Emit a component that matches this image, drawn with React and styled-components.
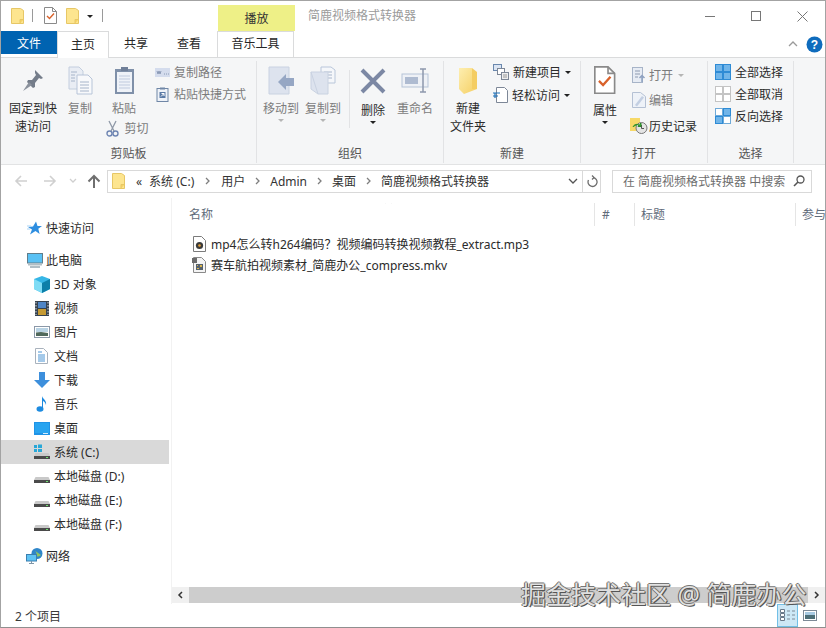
import React from "react";
import styled, { createGlobalStyle } from "styled-components";

const GlobalStyle = createGlobalStyle`
  html, body { margin: 0; padding: 0; background: #fff; }
  body { font-family: "Noto Sans", "Noto Sans CJK SC", sans-serif; font-size: 12px; color: #262626; }
  * { box-sizing: border-box; }
  svg { display: block; flex: none; }
`;

const Window = styled.div`
  position: relative;
  width: 826px;
  height: 628px;
  display: flex;
  flex-direction: column;
  overflow: hidden;
  background: #fff;
  border: 1px solid #a3a3a3;
  border-bottom-color: #8f8f8f;
`;

/* title bar */
const TitleRow = styled.div`
  height: 30px;
  display: flex;
  align-items: flex-end;
`;
const Qat = styled.div`
  width: 217px;
  height: 30px;
  display: flex;
  align-items: center;
  gap: ${(p) => p.$gap || 0}px;
  padding: 0 0 1px 10px;
`;
const QatSep = styled.div`
  width: 1px;
  height: 13px;
  background: #9a9a9a;
  margin: ${(p) => p.$m || "0 11px 0 8px"};
`;
const QatGap = styled.div`
  width: 9px;
  flex: none;
`;
const ContextTab = styled.div`
  width: 77px;
  height: 26px;
  background: #eef087;
  display: flex;
  align-items: center;
  justify-content: center;
  color: #333;
  font-size: 12px;
`;
const Title = styled.div`
  margin-left: 13px;
  height: 30px;
  line-height: 29px;
  color: #9b9b9b;
`;
const Controls = styled.div`
  margin-left: auto;
  height: 30px;
  display: flex;
`;
const Ctrl = styled.div`
  width: 46px;
  display: flex;
  align-items: center;
  justify-content: center;
`;

/* tab row */
const TabRow = styled.div`
  height: 26px;
  display: flex;
  position: relative;
  z-index: 1;
`;
const FileTab = styled.div`
  width: 56px;
  height: 23px;
  background: #0063b1;
  color: #fff;
  display: flex;
  align-items: center;
  justify-content: center;
`;
const Tab = styled.div`
  width: ${(p) => p.$w}px;
  height: ${(p) => (p.$active ? 27 : 26)}px;
  background: #fff;
  display: flex;
  align-items: center;
  justify-content: center;
  padding-bottom: 3px;
  margin-left: ${(p) => p.$ml || 0}px;
  border: 1px solid ${(p) => (p.$active ? "#dadbdc" : "transparent")};
  border-bottom: none;
  ${(p) => p.$ctx && "border-color: #dadbdc;"}
`;
const HelpBox = styled.div`
  margin-left: auto;
  width: 44px;
  margin-right: 2px;
  display: flex;
  align-items: center;
  justify-content: space-between;
  padding-left: 9px;
`;

/* ribbon */
const Ribbon = styled.div`
  height: 108px;
  display: flex;
  background: #f5f6f7;
  border-top: 1px solid #dadbdc;
  border-bottom: 1px solid #e2e3e4;
`;
const Group = styled.div`
  width: ${(p) => p.$w}px;
  flex: none;
  display: flex;
  flex-direction: column;
  margin: 3px 0 1px;
  border-right: 1px solid #e2e3e5;
`;
const GroupBody = styled.div`
  flex: 1;
  display: flex;
  padding-left: ${(p) => p.$pl || 0}px;
`;
const GroupLabel = styled.div`
  height: 20px;
  line-height: 21px;
  text-align: center;
  color: #555;
`;
const Big = styled.div`
  width: ${(p) => p.$w}px;
  margin-right: ${(p) => p.$mr || 0}px;
  display: flex;
  flex-direction: column;
  align-items: center;
  flex: none;
`;
const BigIcon = styled.div`
  height: 39px;
  display: flex;
  align-items: center;
  justify-content: center;
`;
const BigText = styled.div`
  text-align: center;
  line-height: 18px;
  margin-top: ${(p) => p.$mt ?? 0}px;
  color: ${(p) => (p.$off ? "#7c7c7c" : "#2b2b2b")};
`;
const Caret = styled.div`
  width: 0;
  height: 0;
  margin-top: 1px;
  border-left: 3px solid transparent;
  border-right: 3px solid transparent;
  border-top: 3px solid ${(p) => (p.$off ? "#b5b5b5" : "#222")};
`;
const InlineCaret = styled(Caret)`
  margin: 1px 0 0 ${(p) => p.$ml || 0}px;
`;
const VDivider = styled.div`
  width: 1px;
  height: 58px;
  background: #e2e3e5;
  margin: 9px 0 0 0;
  flex: none;
`;
const SmallCol = styled.div`
  display: flex;
  flex-direction: column;
  padding-top: ${(p) => p.$pt || 0}px;
  margin-left: ${(p) => p.$ml || 0}px;
`;
const Small = styled.div`
  height: ${(p) => p.$h || 22}px;
  display: flex;
  align-items: center;
  gap: ${(p) => p.$gap || 4}px;
  margin-left: ${(p) => p.$ml || 0}px;
  white-space: nowrap;
  color: ${(p) => (p.$off ? "#7c7c7c" : "#2b2b2b")};
`;
const CutRow = styled(Small)`
  margin-top: -1px;
  margin-left: 7px;
`;
const PasteCol = styled.div`
  width: 50px;
  flex: none;
  display: flex;
  flex-direction: column;
  align-items: center;
`;

/* address bar */
const NavBar = styled.div`
  height: 33px;
  display: flex;
  align-items: center;
  padding-bottom: 1px;
`;
const NavButtons = styled.div`
  width: 106px;
  display: flex;
  align-items: center;
  padding-left: 13px;
`;
const NavBtn = styled.div`
  width: ${(p) => p.$w}px;
  margin-left: ${(p) => p.$ml || 0}px;
  flex: none;
  display: flex;
  justify-content: center;
`;
const Address = styled.div`
  width: 476px;
  height: 23px;
  border: 1px solid #d9d9d9;
  display: flex;
  align-items: center;
  padding-left: 4px;
  white-space: nowrap;
`;
const Crumb = styled.span`
  color: #333;
`;
const RootCrumb = styled(Crumb)`
  margin: 0 7px 0 11px;
`;
const CrumbSep = styled.div`
  width: ${(p) => p.$w}px;
  display: flex;
  justify-content: center;
`;
const AddressDrop = styled.div`
  margin-left: auto;
  margin-right: 4px;
`;
const Refresh = styled.div`
  width: 18px;
  height: 23px;
  border: 1px solid #d9d9d9;
  border-left: none;
  display: flex;
  align-items: center;
  justify-content: center;
`;
const Search = styled.div`
  width: 200px;
  height: 23px;
  margin-left: 11px;
  border: 1px solid #d9d9d9;
  display: flex;
  align-items: center;
  justify-content: space-between;
  padding: 0 6px 0 10px;
  color: #6d6d6d;
  white-space: nowrap;
`;

/* panes */
const Body = styled.div`
  flex: 1;
  min-height: 0;
  display: flex;
`;
const Sidebar = styled.div`
  width: 171px;
  flex: none;
  padding-top: 18px;
  border-right: 1px solid #f2f2f2;
`;
const NavGroup = styled.div`
  margin-bottom: 8px;
`;
const NavRow = styled.div`
  height: 24px;
  width: 168px;
  display: flex;
  align-items: center;
  gap: ${(p) => (p.$sub ? 4 : 3)}px;
  padding-left: ${(p) => (p.$sub ? 32 : 25)}px;
  background: ${(p) => (p.$selected ? "#d9d9d9" : "transparent")};
  color: #2b2b2b;
  white-space: nowrap;
`;
const IconSlot = styled.div`
  width: 17px;
  height: 17px;
  display: flex;
  align-items: center;
  justify-content: center;
  flex: none;
`;
const Main = styled.div`
  flex: 1;
  min-width: 0;
  display: flex;
  flex-direction: column;
`;
const Header = styled.div`
  display: flex;
  height: 23px;
  margin-top: 5px;
  overflow: hidden;
  color: #5f6b7a;
`;
const HeadCell = styled.div`
  position: relative;
  width: ${(p) => p.$w}px;
  flex: none;
  padding-left: ${(p) => p.$pl}px;
  border-right: ${(p) => (p.$last ? "none" : "1px solid #e5e5e5")};
  line-height: 24px;
  white-space: nowrap;
`;
const SortArrow = styled.div`
  position: absolute;
  left: 212px;
  top: -4px;
`;
const FileList = styled.div`
  flex: 1;
  padding: 7px 0 0 20px;
`;
const FileRow = styled.div`
  height: 21px;
  display: flex;
  align-items: center;
  gap: 5px;
  white-space: nowrap;
  color: #2b2b2b;
`;
const FileIcon = styled.div`
  width: 14px;
  display: flex;
  justify-content: center;
  flex: none;
`;
const Scrollbar = styled.div`
  height: 16px;
  margin-bottom: 1px;
  display: flex;
`;
const ScrollBtn = styled.div`
  width: 17px;
  flex: none;
  background: #f0f0f0;
  display: flex;
  align-items: center;
  justify-content: center;
`;
const ScrollThumb = styled.div`
  flex: 1;
  background: #cdcdcd;
`;
const StatusBar = styled.div`
  height: 23px;
  display: flex;
  align-items: center;
  padding-left: 14px;
  color: #3a3a3a;
`;
const ViewBtns = styled.div`
  margin-left: auto;
  height: 23px;
  display: flex;
  align-items: center;
  gap: 4px;
  margin-right: 7px;
`;
const ViewBtn = styled.div`
  width: ${(p) => (p.$on ? 21 : 16)}px;
  height: 23px;
  display: flex;
  align-items: center;
  justify-content: center;
  background: ${(p) => (p.$on ? "#cde8f6" : "transparent")};
  border: 1px solid ${(p) => (p.$on ? "#72bfe6" : "transparent")};
`;
const Watermark = styled.div`
  position: absolute;
  left: 520px;
  top: 576px;
  font-size: 25px;
  line-height: 34px;
  white-space: nowrap;
  color: rgba(255, 255, 255, 0.82);
  text-shadow: 1px 1px 0 #555, -1px 0 0 #666, 0 -1px 0 #777, 1px 0 1px #666;
`;

/* drawings */
const Folder = ({ w = 13, h = 16 }) => (
  <svg width={w} height={h} viewBox="0 0 13 16">
    <path d="M.5.5h9l3 2v13H.5z" fill="#fde58f" stroke="#e7c766" />
    <path d="M9 15.5v-4h3.5" fill="#f6d264" stroke="#e7c766" />
  </svg>
);
const CheckDoc = ({ s = 1 }) => (
  <svg width={13 * s} height={17 * s} viewBox="0 0 13 17">
    <path d="M.5.5h8l4 4v12H.5z" fill="#fff" stroke="#8a8a8a" />
    <path d="M8.5.5v4h4" fill="none" stroke="#8a8a8a" />
    <path d="M3 9l2.5 2.5L10 6.5" fill="none" stroke="#d9622b" strokeWidth="1.4" />
  </svg>
);
const Pin = () => (
  <svg width="22" height="24" viewBox="0 0 22 24">
    <path d="M13 1l8 8-2 1-2-1-4 5 0 4-2 1-6-6 1-2h4l4-5-1-2z" fill="#747d8a" />
    <path d="M7 13l-6 9 9-6z" fill="#8b929d" />
  </svg>
);
const Pages = () => (
  <svg width="25" height="29" viewBox="0 0 25 29">
    <path d="M1 1h10l4 4v18H1z" fill="#e9edf4" stroke="#c3cede" />
    <path d="M9 9h11l4 4v15H9z" fill="#f8f9fb" stroke="#b7c4d8" />
    <path d="M12 16h9M12 19h9M12 22h9M12 25h9M3 6h6M3 9h4M3 12h4M3 15h4" stroke="#a6b4c9" />
  </svg>
);
const Clipboard = () => (
  <svg width="21" height="29" viewBox="0 0 21 29">
    <rect x="1" y="3" width="19" height="25" fill="#7f90a9" />
    <rect x="3" y="6" width="15" height="20" fill="#eef2f8" />
    <path d="M5 10h11M5 13h11M5 16h11M5 19h11M5 22h11" stroke="#bfcade" />
    <rect x="7" y="1" width="7" height="4" fill="#6f7f98" />
  </svg>
);
const Scissors = () => (
  <svg width="13" height="17" viewBox="0 0 13 17">
    <path d="M3 1l5 10M10 1L5 11" stroke="#8e98a7" strokeWidth="1.3" fill="none" />
    <circle cx="3.5" cy="13.5" r="2.5" fill="none" stroke="#6f86b3" strokeWidth="1.4" />
    <circle cx="9.5" cy="13.5" r="2.5" fill="none" stroke="#6f86b3" strokeWidth="1.4" />
  </svg>
);
const PathIcon = () => (
  <svg width="15" height="9" viewBox="0 0 15 9">
    <rect width="15" height="9" fill="#d4dced" />
    <path d="M2 3l1 3 1-3 1 3 1-3M9 6h1M11 6h1M13 6h1" stroke="#7a8aa8" fill="none" strokeWidth=".8" />
  </svg>
);
const ShortcutIcon = () => (
  <svg width="15" height="15" viewBox="-1.5 0 15 15">
    <rect x=".5" y="1.5" width="11" height="13" fill="#eef2f8" stroke="#6f86a6" />
    <rect x="3.5" y=".5" width="5" height="2" fill="#6f86a6" />
    <rect x="3" y="5" width="6" height="6" fill="#5a7aa6" />
    <path d="M4.5 9.5l3-3M5 6.500h2.500V9" stroke="#fff" fill="none" />
  </svg>
);
const MoveTo = ({ copy }) => (
  <svg width="27" height="29" viewBox="0 0 27 29">
    {copy && <path d="M11 1h10l4 3v13H11z" fill="#f5f7fa" stroke="#b9c6da" />}
    {copy && <path d="M14 6h8M14 9h8M14 12h8" stroke="#a8b6cc" />}
    <path d={copy ? "M1 6h17v22H8z M1 6v17l7 5" : "M1 1h20v27H1z"} fill="#dde3ee" stroke="#c9d2e1" />
    {!copy && <path d="M10 19l8-8v4h8v8h-8v4z" transform="translate(0 -3)" fill="#96a7c4" />}
  </svg>
);
const DeleteX = () => (
  <svg width="26" height="26" viewBox="0 0 26 26">
    <path d="M2 2l22 22M24 2L2 24" stroke="#7c88a4" strokeWidth="4" />
  </svg>
);
const Rename = () => (
  <svg width="28" height="25" viewBox="0 0 28 25">
    <rect x="1" y="6" width="26" height="13" fill="#eef1f6" stroke="#b6c3d7" />
    <rect x="4" y="9" width="13" height="7" fill="#aebbd1" />
    <path d="M19 1h6M22 1v23M19 24h6" stroke="#8d98ad" strokeWidth="1.500" fill="none" />
  </svg>
);
const BigFolder = () => (
  <svg width="20" height="28" viewBox="0 0 20 28">
    <defs>
      <linearGradient id="bf" x1="0" x2="1" y1="0" y2="1">
        <stop offset="0" stopColor="#fdeeb0" />
        <stop offset="1" stopColor="#f5cf62" />
      </linearGradient>
    </defs>
    <path d="M1 1h13v5l5-1v17l-13 5-5-5z" fill="url(#bf)" />
    <path d="M14 1l5 4v17h-5z" fill="#f4cd63" />
  </svg>
);
const NewItem = () => (
  <svg width="16" height="16" viewBox="0 0 16 16">
    <rect x=".5" y=".5" width="8" height="6" fill="#dbe5f3" stroke="#6a88ae" />
    <rect x="4.500" y="4.500" width="7" height="6" fill="#fff" stroke="#7d8797" />
    <rect x="8.500" y="8.500" width="7" height="7" fill="#eee" stroke="#7d8797" />
    <path d="M10 11h4M10 13h4" stroke="#999" />
  </svg>
);
const EasyAccess = () => (
  <svg width="15" height="16" viewBox="0 0 15 16">
    <path d="M3.500.5h8l3 3v12h-11z" fill="#fff" stroke="#7d8797" />
    <path d="M0 6h7M0 9h5M2 6v5" stroke="#1d70b8" fill="none" strokeWidth="1.200" />
  </svg>
);
const OpenIcon = () => (
  <svg width="15" height="16" viewBox="0 0 15 16">
    <rect x=".5" y=".5" width="10" height="15" fill="#e7ecf4" stroke="#a7b4c8" />
    <path d="M3 4h5M3 7h5M3 10h3" stroke="#8d9ab0" />
    <path d="M10 15V9M7.500 11l2.500-2.500L12.500 11" stroke="#8fa2c1" fill="none" strokeWidth="1.500" />
  </svg>
);
const EditIcon = () => (
  <svg width="14" height="16" viewBox="0 0 14 16">
    <path d="M.5.5h8l5 4v11H.5z" fill="#eef2f8" stroke="#b5c1d4" />
    <path d="M3 13l7-9 2 1.500-7 9z" fill="#c3cfe2" />
  </svg>
);
const HistoryIcon = () => (
  <svg width="18" height="16" viewBox="0 0 18 16">
    <path d="M0 0h10v13H0z" fill="#f7d968" />
    <circle cx="11.500" cy="10" r="5.500" fill="#e4e4e4" stroke="#777" />
    <path d="M11.500 7v3.500H14" stroke="#555" fill="none" />
    <path d="M3 9a4 4 0 0 1 6-2l-1 1.500h3V5l-1 1" fill="#3aa335" stroke="#2b8a2b" />
  </svg>
);
const Tiles = ({ mode }) => {
  const on = (i) => mode === "all" || (mode === "inv" && (i === 1 || i === 2));
  const cells = [[0, 0], [1, 0], [0, 1], [1, 1]];
  return (
    <svg width="16" height="16" viewBox="0 0 16 16">
      {cells.map(([cx, cy], i) => (
        <rect
          key={i}
          x={cx * 8 + 0.5}
          y={cy * 8 + 0.5}
          width="7"
          height="7"
          fill={on(i) ? "#71b5e9" : "#fff"}
          stroke={mode === "none" ? "#c4c4c4" : on(i) ? "#2e8bd5" : "#6faad8"}
        />
      ))}
    </svg>
  );
};
const Star = () => (
  <svg width="15" height="14" viewBox="0 0 15 14">
    <path d="M9 .5l1.500 4.500H15l-3.700 2.800 1.300 5.200L8.500 10 3 13.500l2-5L1 6l5-.5z" fill="#2e8ee0" />
    <path d="M0 5h4M0 8h3" stroke="#a9d3f5" />
  </svg>
);
const Pc = () => (
  <svg width="16" height="16" viewBox="0 0 16 16">
    <rect x=".5" y="1.500" width="15" height="9.500" fill="#59c1f4" stroke="#607d8b" />
    <path d="M1 12.500h14" stroke="#b0bec5" strokeWidth="2" />
    <path d="M3 15h10" stroke="#607d8b" />
  </svg>
);
const Cube = () => (
  <svg width="16" height="17" viewBox="0 0 16 17">
    <path d="M8 0l8 3v10l-8 4-8-4V3z" fill="#36b6e6" />
    <path d="M8 7l8-4v10l-8 4z" fill="#0d7fa8" />
    <path d="M0 3l8 4v10l-8-4z" fill="#7fdcf5" />
  </svg>
);
const Film = () => (
  <svg width="14" height="15" viewBox="0 0 14 15">
    <rect width="14" height="15" fill="#36424f" />
    <rect x="3" y="1" width="8" height="6" fill="#4f86c6" />
    <rect x="3" y="8" width="8" height="6" fill="#c59a34" />
    <path d="M1 1v13M13 1v13" stroke="#cfd6de" strokeDasharray="1.500 1.500" />
  </svg>
);
const Picture = () => (
  <svg width="16" height="12" viewBox="0 0 16 12">
    <rect x=".5" y=".5" width="15" height="11" fill="#fff" stroke="#8b98a8" />
    <rect x="2" y="2" width="12" height="4" fill="#b9d3e4" />
    <path d="M2 9V6.500l5-.5 7 1v3H2z" fill="#50695c" />
  </svg>
);
const DocIcon = () => (
  <svg width="13" height="16" viewBox="0 0 13 16">
    <path d="M.5.500h8l4 4v11H.5z" fill="#fff" stroke="#a9b2bd" />
    <path d="M3 4h4M3 7h7M3 9h7M3 11h7M3 13h7" stroke="#4b94d4" />
  </svg>
);
const Download = () => (
  <svg width="16" height="16" viewBox="0 0 16 16">
    <path d="M5 0h6v8h5l-8 8-8-8h5z" fill="#3d8fdc" />
  </svg>
);
const Music = () => (
  <svg width="12" height="16" viewBox="0 0 12 16">
    <ellipse cx="4" cy="13" rx="3.500" ry="2.800" fill="#1d8be0" />
    <path d="M6 13V0c.500 3 5 4 4 9-.500-2.500-2-3.500-3-4v8z" fill="#1d8be0" />
  </svg>
);
const Desktop = () => (
  <svg width="16" height="13" viewBox="0 0 16 13">
    <rect width="16" height="13" fill="#1f93e6" />
    <rect x="1" y="1" width="14" height="10" fill="#28a4f0" />
    <path d="M9 11.500h5" stroke="#d5ecfb" />
  </svg>
);
const Disk = ({ win }) => (
  <svg width="16" height="16" viewBox="0 0 16 16">
    {win && <path d="M0 1h3v3H0zM4 .5h4v3.500H4zM0 5h3v3H0zM4 5h4v3H4z" fill="#28a8d8" />}
    <path d="M1.500 9h13l1.500 3H0z" fill="#c9c9c9" />
    <rect y="12" width="16" height="3" fill="#4a4a4a" />
    <rect x="12" y="13" width="2" height="1" fill="#6fe06f" />
  </svg>
);
const Network = () => (
  <svg width="17" height="16" viewBox="0 0 17 16">
    <circle cx="11" cy="5.500" r="5.500" fill="#2f86c9" />
    <path d="M8 2c2 1 3 3 2 5s3 2 5 0" fill="#8cc265" />
    <rect x=".5" y="6.500" width="10" height="6.500" fill="#5dc2f3" stroke="#3a7fb0" />
    <path d="M5.500 13v2M3 15.500h5" stroke="#7d95a8" />
  </svg>
);
const Mp3Icon = () => (
  <svg width="13" height="16" viewBox="0 0 13 16">
    <path d="M.5.500h8l4 4v11H.5z" fill="#fff" stroke="#7b7b7b" />
    <circle cx="6.500" cy="9.500" r="3.600" fill="#3b3b3b" />
    <circle cx="6.500" cy="9.500" r="1.300" fill="#e8a33a" />
  </svg>
);
const MkvIcon = () => (
  <svg width="14" height="16" viewBox="0 0 14 16">
    <path d="M1.500.500h8l4 4v11h-12z" fill="#f4f4f4" stroke="#8a8a8a" />
    <rect x="0" y="1" width="5" height="5" fill="#6b6b6b" />
    <rect x="4" y="7" width="7" height="6" fill="#55616d" />
    <path d="M5 8h1v1H5zM8 8h2v2H8zM5 11h2v1H5z" fill="#d9b44a" />
  </svg>
);
const Arrow = ({ flip, color = "#d0d0d0", sw = 1.6 }) => (
  <svg width="14" height="14" viewBox="0 0 14 14">
    <path
      d={flip ? "M1 7h11M7 2l5 5-5 5" : "M13 7H2M7 2L2 7l5 5"}
      fill="none"
      stroke={color}
      strokeWidth={sw}
    />
  </svg>
);
const Chevron = ({ d = "M1 1l3 3-3 3", w = 6, h = 8, color = "#7e7e7e", sw = 1.300 }) => (
  <svg width={w} height={h} viewBox={`0 0 ${w} ${h}`}>
    <path d={d} fill="none" stroke={color} strokeWidth={sw} />
  </svg>
);

const navTop = [{ label: "快速访问", icon: <Star /> }];
const navPc = [
  { label: "3D 对象", icon: <Cube /> },
  { label: "视频", icon: <Film /> },
  { label: "图片", icon: <Picture /> },
  { label: "文档", icon: <DocIcon /> },
  { label: "下载", icon: <Download /> },
  { label: "音乐", icon: <Music /> },
  { label: "桌面", icon: <Desktop /> },
  { label: "系统 (C:)", icon: <Disk win />, selected: true },
  { label: "本地磁盘 (D:)", icon: <Disk /> },
  { label: "本地磁盘 (E:)", icon: <Disk /> },
  { label: "本地磁盘 (F:)", icon: <Disk /> },
];

const crumbs = ["系统 (C:)", "用户", "Admin", "桌面", "简鹿视频格式转换器"];

export default function App() {
  return (
    <>
      <GlobalStyle />
      <Window>
        <TitleRow>
          <Qat>
            <Folder />
            <QatSep />
            <CheckDoc />
            <QatGap />
            <Folder />
            <InlineCaret $ml={8} />
            <QatSep $m="0 0 0 9px" />
          </Qat>
          <ContextTab>播放</ContextTab>
          <Title>简鹿视频格式转换器</Title>
          <Controls>
            <Ctrl>
              <svg width="10" height="10" viewBox="0 0 10 10"><path d="M0 5.500h10" stroke="#777" /></svg>
            </Ctrl>
            <Ctrl>
              <svg width="10" height="10" viewBox="0 0 10 10"><rect x=".5" y=".5" width="9" height="9" fill="none" stroke="#777" /></svg>
            </Ctrl>
            <Ctrl>
              <svg width="11" height="11" viewBox="0 0 11 11"><path d="M.5.500l10 10M10.500.500l-10 10" stroke="#777" /></svg>
            </Ctrl>
          </Controls>
        </TitleRow>

        <TabRow>
          <FileTab>文件</FileTab>
          <Tab $w={52} $active>主页</Tab>
          <Tab $w={54}>共享</Tab>
          <Tab $w={52}>查看</Tab>
          <Tab $w={77} $ml={2} $ctx>音乐工具</Tab>
          <HelpBox>
            <Chevron d="M1 6l4-4 4 4" w={10} h={8} color="#9a9a9a" />
            <svg width="17" height="17" viewBox="0 0 17 17">
              <circle cx="8.500" cy="8.500" r="8" fill="#0f6cbd" />
              <text x="8.500" y="13" textAnchor="middle" fontSize="12" fontWeight="700" fill="#fff" fontFamily="Liberation Sans">?</text>
            </svg>
          </HelpBox>
        </TabRow>

        <Ribbon>
          <Group $w={256}>
            <GroupBody $pl={4}>
              <Big $w={56}>
                <BigIcon><Pin /></BigIcon>
                <BigText>固定到快<br />速访问</BigText>
              </Big>
              <Big $w={38}>
                <BigIcon><Pages /></BigIcon>
                <BigText $off>复制</BigText>
              </Big>
              <PasteCol>
                <BigIcon><Clipboard /></BigIcon>
                <BigText $off>粘贴</BigText>
                <CutRow $off $gap={5}><Scissors />剪切</CutRow>
              </PasteCol>
              <SmallCol $ml={6}>
                <Small $off><PathIcon />复制路径</Small>
                <Small $off><ShortcutIcon />粘贴快捷方式</Small>
              </SmallCol>
            </GroupBody>
            <GroupLabel>剪贴板</GroupLabel>
          </Group>

          <Group $w={187}>
            <GroupBody $pl={4}>
              <Big $w={40} $mr={2}>
                <BigIcon><MoveTo /></BigIcon>
                <BigText $off>移动到</BigText>
                <Caret $off />
              </Big>
              <Big $w={40} $mr={6}>
                <BigIcon><MoveTo copy /></BigIcon>
                <BigText $off>复制到</BigText>
                <Caret $off />
              </Big>
              <VDivider />
              <Big $w={46}>
                <BigIcon><DeleteX /></BigIcon>
                <BigText $mt={2}>删除</BigText>
                <Caret />
              </Big>
              <Big $w={38}>
                <BigIcon><Rename /></BigIcon>
                <BigText $off>重命名</BigText>
              </Big>
            </GroupBody>
            <GroupLabel>组织</GroupLabel>
          </Group>

          <Group $w={137}>
            <GroupBody $pl={4}>
              <Big $w={40}>
                <BigIcon><BigFolder /></BigIcon>
                <BigText>新建<br />文件夹</BigText>
              </Big>
              <SmallCol $ml={5}>
                <Small><NewItem />新建项目<InlineCaret /></Small>
                <Small $h={24}><EasyAccess />轻松访问<InlineCaret /></Small>
              </SmallCol>
            </GroupBody>
            <GroupLabel>新建</GroupLabel>
          </Group>

          <Group $w={127}>
            <GroupBody $pl={4}>
              <Big $w={40}>
                <BigIcon><CheckDoc s={1.650} /></BigIcon>
                <BigText $mt={2}>属性</BigText>
                <Caret />
              </Big>
              <SmallCol $pt={1} $ml={7}>
                <Small $h={25} $off $gap={2}><OpenIcon />打开<InlineCaret $off $ml={3} /></Small>
                <Small $h={26} $off $gap={3}><EditIcon />编辑</Small>
                <Small $h={25} $gap={1} $ml={-2}><HistoryIcon />历史记录</Small>
              </SmallCol>
            </GroupBody>
            <GroupLabel>打开</GroupLabel>
          </Group>

          <Group $w={86}>
            <GroupBody $pl={7}>
              <SmallCol>
                <Small><Tiles mode="all" />全部选择</Small>
                <Small><Tiles mode="none" />全部取消</Small>
                <Small><Tiles mode="inv" />反向选择</Small>
              </SmallCol>
            </GroupBody>
            <GroupLabel>选择</GroupLabel>
          </Group>
        </Ribbon>

        <NavBar>
          <NavButtons>
            <NavBtn $w={14}><Arrow /></NavBtn>
            <NavBtn $w={36} $ml={4}><Arrow flip /></NavBtn>
            <NavBtn $w={10}><Chevron d="M1 1l3 3 3-3" w={8} h={6} color="#cfcfcf" /></NavBtn>
            <NavBtn $w={26} $ml={3}>
              <svg width="14" height="14" viewBox="0 0 14 14">
                <path d="M7 14V2M1.500 7.500L7 2l5.500 5.500" fill="none" stroke="#6f6f6f" strokeWidth="2" />
              </svg>
            </NavBtn>
          </NavButtons>
          <Address>
            <Folder />
            <RootCrumb>«</RootCrumb>
            {crumbs.map((c, i) => (
              <React.Fragment key={c}>
                {i > 0 && <CrumbSep $w={i === 1 ? 27 : 25}><Chevron /></CrumbSep>}
                <Crumb>{c}</Crumb>
              </React.Fragment>
            ))}
            <AddressDrop>
              <Chevron d="M1 1l4 4 4-4" w={10} h={7} color="#555" />
            </AddressDrop>
          </Address>
          <Refresh>
            <svg width="12" height="13" viewBox="0 0 12 13">
              <path d="M7 2.500A4.500 4.500 0 1 1 2.500 5M6 .5l2 2-2 2" fill="none" stroke="#6e6e6e" strokeWidth="1.300" />
            </svg>
          </Refresh>
          <Search>
            在 简鹿视频格式转换器 中搜索
            <svg width="12" height="12" viewBox="0 0 12 12">
              <circle cx="7.500" cy="4.500" r="3.500" fill="none" stroke="#555" strokeWidth="1.300" />
              <path d="M5 7l-4 4" stroke="#555" strokeWidth="1.600" />
            </svg>
          </Search>
        </NavBar>

        <Body>
          <Sidebar>
            <NavGroup>
              {navTop.map((n) => (
                <NavRow key={n.label}><IconSlot>{n.icon}</IconSlot>{n.label}</NavRow>
              ))}
            </NavGroup>
            <NavGroup>
              <NavRow><IconSlot><Pc /></IconSlot>此电脑</NavRow>
              {navPc.map((n) => (
                <NavRow key={n.label} $sub $selected={n.selected}>
                  <IconSlot>{n.icon}</IconSlot>{n.label}
                </NavRow>
              ))}
            </NavGroup>
            <NavGroup>
              <NavRow><IconSlot><Network /></IconSlot>网络</NavRow>
            </NavGroup>
          </Sidebar>
          <Main>
            <Header>
              <HeadCell $w={423} $pl={17}>
                名称
                <SortArrow><Chevron d="M1 4l3.500-3L8 4" w={9} h={6} color="#8a8a8a" sw={1} /></SortArrow>
              </HeadCell>
              <HeadCell $w={40} $pl={7}>#</HeadCell>
              <HeadCell $w={161} $pl={6}>标题</HeadCell>
              <HeadCell $w={40} $pl={6} $last>参与创作者</HeadCell>
            </Header>
            <FileList>
              <FileRow><FileIcon><Mp3Icon /></FileIcon>mp4怎么转h264编码？视频编码转换视频教程_extract.mp3</FileRow>
              <FileRow><FileIcon><MkvIcon /></FileIcon>赛车航拍视频素材_简鹿办公_compress.mkv</FileRow>
            </FileList>
            <Scrollbar>
              <ScrollBtn><Chevron d="M5 1L2 4l3 3" w={7} h={8} color="#333" sw={1.500} /></ScrollBtn>
              <ScrollThumb />
              <ScrollBtn><Chevron d="M2 1l3 3-3 3" w={7} h={8} color="#333" sw={1.500} /></ScrollBtn>
            </Scrollbar>
          </Main>
        </Body>

        <StatusBar>
          2 个项目
          <ViewBtns>
            <ViewBtn $on>
              <svg width="16" height="13" viewBox="0 0 16 13">
                <path d="M.5.500h4v3h-4zM.5 4.500h4v3h-4zM.5 8.500h4v3h-4z" fill="#fff" stroke="#6a7a8a" />
                <path d="M7 2h3M12 2h3M7 6h3M12 6h3M7 10h3M12 10h3" stroke="#7d8a97" />
              </svg>
            </ViewBtn>
            <ViewBtn>
              <svg width="14" height="11" viewBox="0 0 14 11">
                <rect x=".5" y=".5" width="13" height="10" fill="#fff" stroke="#7d8a97" />
                <rect x="2" y="2" width="10" height="3" fill="#a9cbe3" />
                <rect x="2" y="5" width="10" height="4" fill="#4d6f78" />
              </svg>
            </ViewBtn>
          </ViewBtns>
        </StatusBar>

        <Watermark>掘金技术社区 @ 简鹿办公</Watermark>
      </Window>
    </>
  );
}
